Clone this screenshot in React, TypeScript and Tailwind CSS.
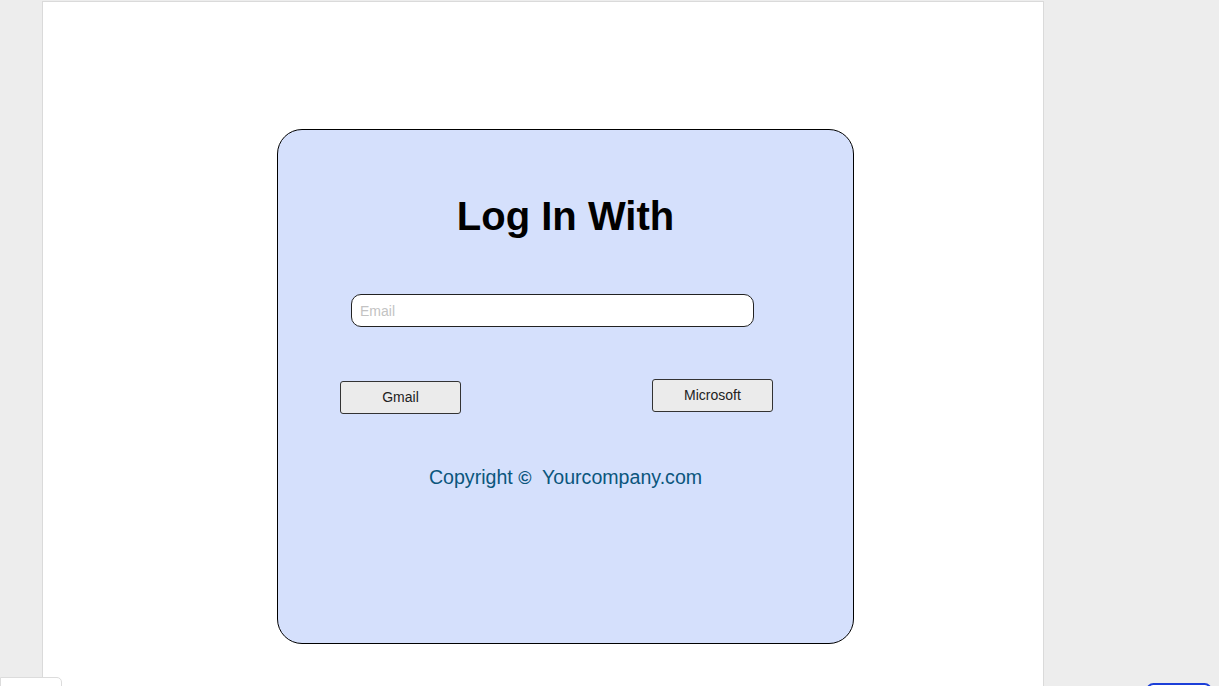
const App = () => {
  return (
    <div
      className="relative h-screen w-full overflow-hidden bg-[#ededed]"
      style={{ fontFamily: '"Liberation Sans", Arial, sans-serif' }}
    >
      <div className="ml-[42px] mt-[1px] h-[720px] w-[1002px] border border-[#dadada] bg-white pt-[127px]">
        <div className="ml-[234px] flex h-[515px] w-[577px] flex-col rounded-[25px] border border-black bg-[#d5e0fc]">
          <h1 className="pt-[66px] text-center text-[40px] font-bold leading-none text-black">
            Log In With
          </h1>

          <input
            type="text"
            placeholder="Email"
            className="ml-[73px] mt-[58px] h-[33px] w-[403px] rounded-[10px] border border-[#222] bg-white px-[8px] text-[14px] text-black outline-none placeholder:text-[#c3c3c3]"
          />

          <div className="mt-[52px] flex items-start justify-between pl-[62px] pr-[80px]">
            <button className="mt-[2px] h-[33px] w-[121px] rounded-[3px] border border-[#333] bg-[#ebebeb] text-[14px] text-[#222]">
              Gmail
            </button>
            <button className="h-[33px] w-[121px] rounded-[3px] border border-[#333] bg-[#ebebeb] text-[14px] text-[#222]">
              Microsoft
            </button>
          </div>

          <p className="mt-[52px] text-center text-[19.6px] leading-[23px] text-[#0b567c]">
            Copyright <span className="text-[18px] font-bold">©</span>&nbsp; Yourcompany.com
          </p>
        </div>
      </div>

      {/* bits of the editor chrome peeking in at the bottom */}
      <div className="absolute bottom-[-10px] left-0 h-[19px] w-[62px] rounded-tr-[5px] border border-[#dcdcdc] bg-white" />
      <div className="absolute bottom-[-12px] left-[1146px] h-[15px] w-[66px] rounded-[10px] border-2 border-[#1c3fd8] bg-white" />
    </div>
  );
};

export default App;
